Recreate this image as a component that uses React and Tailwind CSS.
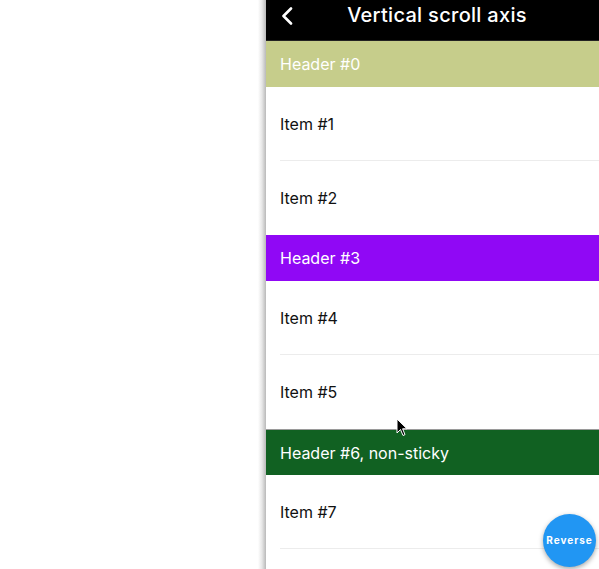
import React from "react";

function Item({ label, sep = true }) {
  return (
    <div className="relative h-[74px] shrink-0 flex items-center pl-[14px] bg-white">
      <span className="text-[16px] text-[#111]">{label}</span>
      {sep && <div className="absolute bottom-0 left-[14px] right-0 h-px bg-[#ececec]" />}
    </div>
  );
}

function Header({ label, bg, top }) {
  return (
    <div className={`h-[46px] shrink-0 flex items-center pl-[14px] ${bg} ${top ? "border-t border-[#9a9a9a]" : ""}`}>
      <span className="text-[16px] text-white">{label}</span>
    </div>
  );
}

export default function App() {
  return (
    <div className="relative w-[599px] h-[569px] overflow-hidden bg-white flex" style={{ fontFamily: "Inter, 'Noto Sans', sans-serif" }}>
      <div className="w-[258px] shrink-0 bg-white" />
      <div className="w-[8px] shrink-0 bg-gradient-to-r from-[#ffffff] via-[#e6e6e6] to-[#b9b9b9]" />
      <div className="flex-1 flex flex-col relative">
        <div className="h-[41px] shrink-0 bg-black relative flex items-start justify-center border-b border-[#222]">
          <svg className="absolute left-[15px] top-[7px]" width="12" height="18" viewBox="0 0 12 18">
            <path d="M10 1.5 L2.5 9 L10 16.5" stroke="white" strokeWidth="2.6" fill="none" strokeLinecap="round" strokeLinejoin="round" />
          </svg>
          <span className="text-white text-[20px] font-medium leading-[28px] mt-[1px] ml-[9px] tracking-[0.3px]">Vertical scroll axis</span>
        </div>
        <Header label="Header #0" bg="bg-[#c6cd8b]" />
        <Item label="Item #1" />
        <Item label="Item #2" sep={false} />
        <Header label="Header #3" bg="bg-[#9008f5]" />
        <Item label="Item #4" />
        <Item label="Item #5" sep={false} />
        <Header label="Header #6, non-sticky" bg="bg-[#116122]" top />
        <Item label="Item #7" />
        <div className="flex-1 bg-white" />
        <button className="absolute left-[277px] top-[514px] w-[53px] h-[53px] rounded-full bg-[#2196f3] shadow-[0_2px_5px_rgba(0,0,0,0.35)] flex items-center justify-center text-white text-[10px] font-bold tracking-[1px]">
          Reverse
        </button>
      </div>
      <svg className="absolute left-[396px] top-[418px]" width="12" height="19" viewBox="0 0 12 19">
        <path d="M1 1 L1 15 L4.5 11.5 L7 17.5 L9 16.6 L6.6 10.8 L11 10.8 Z" fill="black" stroke="white" strokeWidth="1" />
      </svg>
    </div>
  );
}
